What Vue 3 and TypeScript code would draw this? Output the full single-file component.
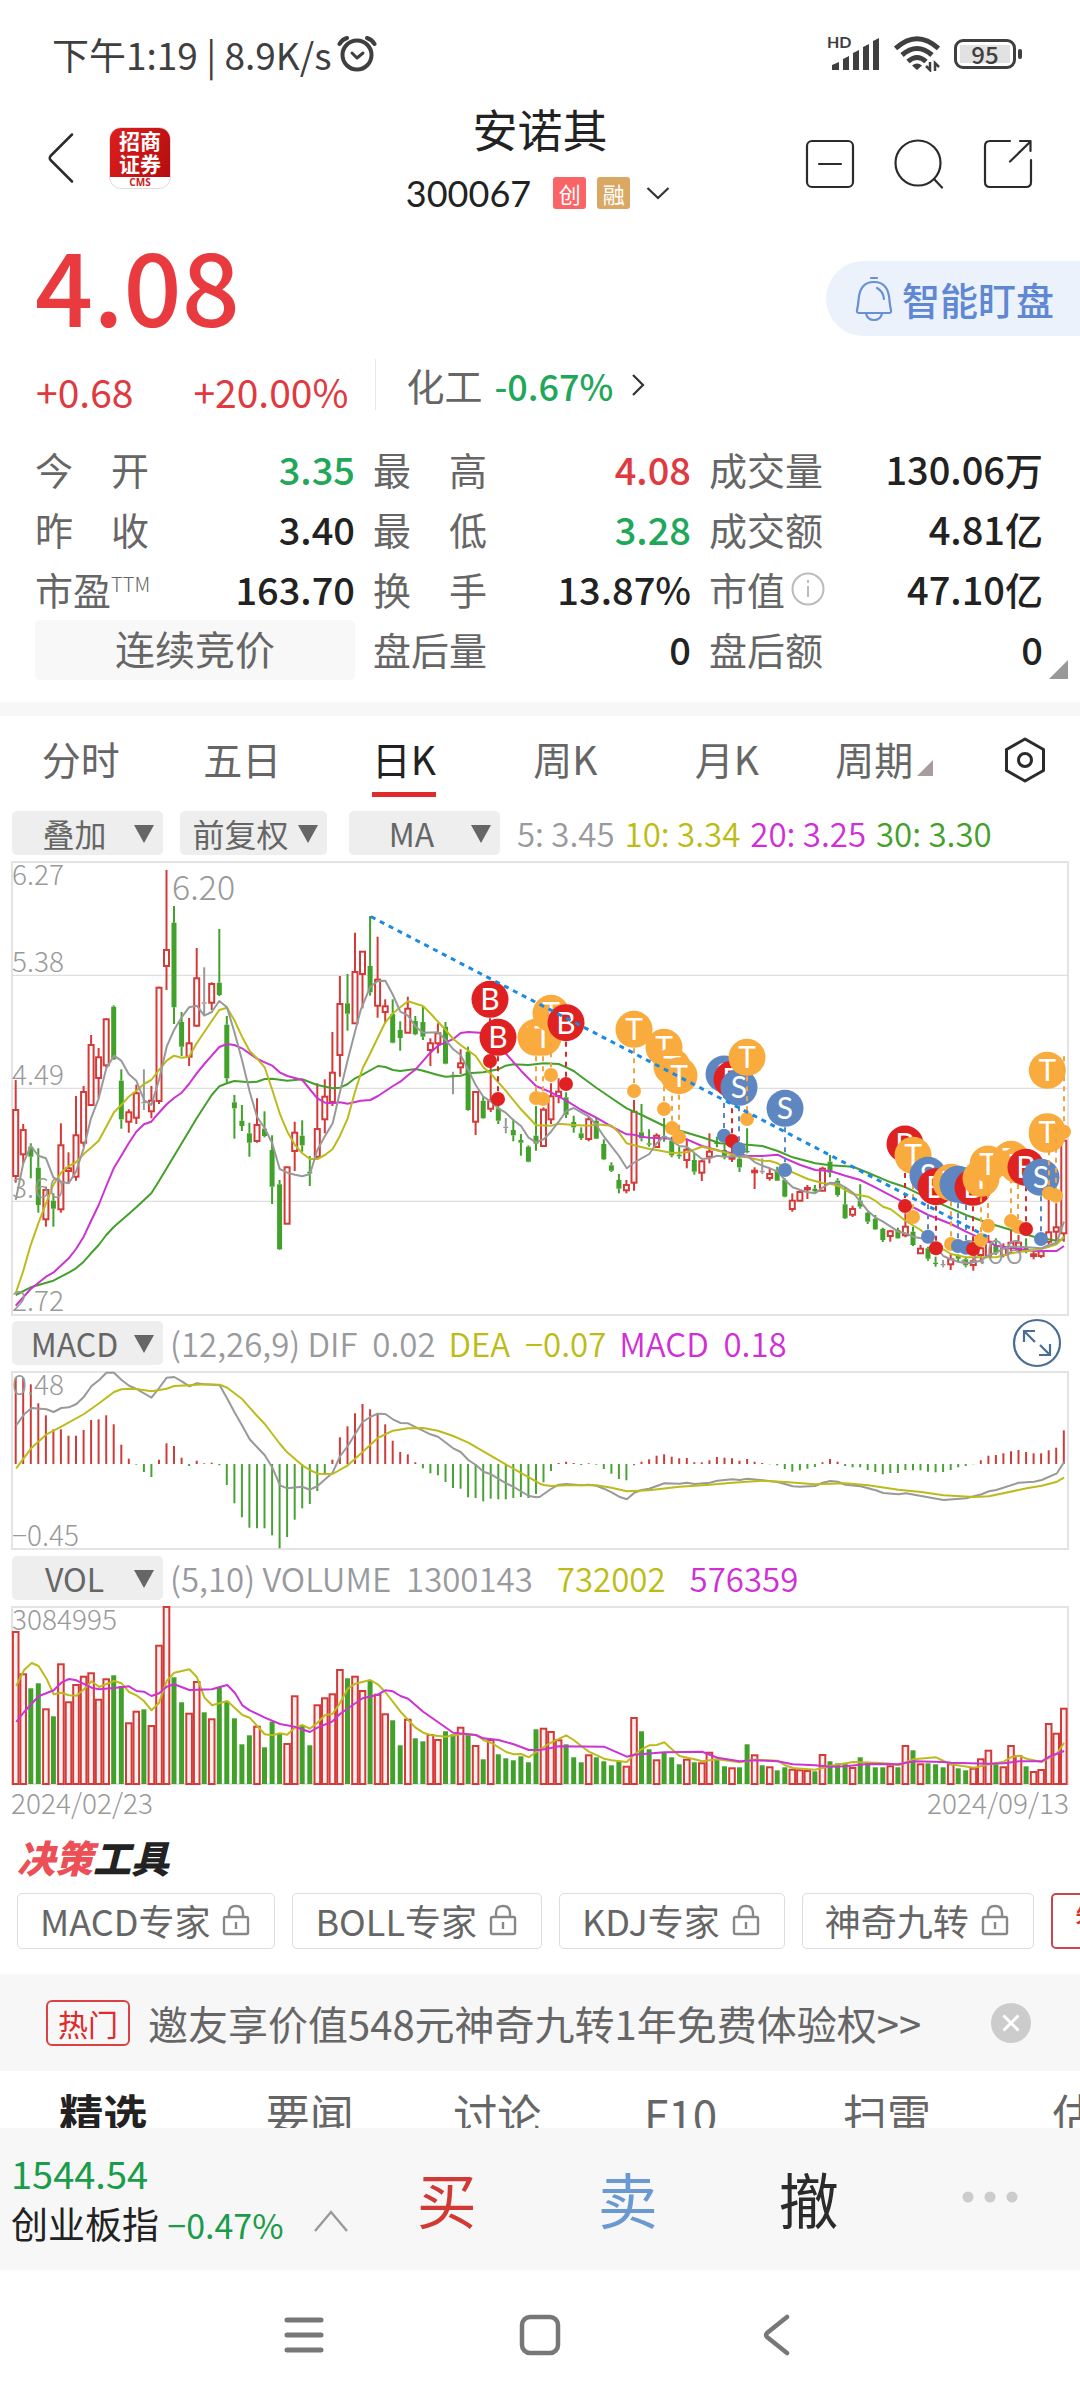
<script setup lang="ts">
interface Stat {
  label: string
  value: string
  tone?: 'up' | 'down'
  spread?: boolean
  sup?: string
  info?: boolean
}

const stats: Stat[] = [
  { label: '今开', value: '3.35', tone: 'down', spread: true },
  { label: '最高', value: '4.08', tone: 'up', spread: true },
  { label: '成交量', value: '130.06万' },
  { label: '昨收', value: '3.40', spread: true },
  { label: '最低', value: '3.28', tone: 'down', spread: true },
  { label: '成交额', value: '4.81亿' },
  { label: '市盈', value: '163.70', sup: 'TTM' },
  { label: '换手', value: '13.87%', spread: true },
  { label: '市值', value: '47.10亿', info: true },
]
const afterHours: Stat[] = [
  { label: '盘后量', value: '0' },
  { label: '盘后额', value: '0' },
]

const periods = ['分时', '五日', '日K', '周K', '月K', '周期']
const averages = [
  { text: '5: 3.45', tone: 'grey' },
  { text: '10: 3.34', tone: 'yellow' },
  { text: '20: 3.25', tone: 'pink' },
  { text: '30: 3.30', tone: 'green' },
]
const tools = ['MACD专家', 'BOLL专家', 'KDJ专家', '神奇九转']
const sections = [
  { text: '精选', span: 206 },
  { text: '要闻', span: 206 },
  { text: '讨论', span: 168 },
  { text: 'F10', span: 198 },
  { text: '扫雷', span: 214 },
  { text: '估值', span: 204 },
]

// All three panels share one column of days.
const dayX = (i: number): number => 15.7 + i * 7.54
const round = (n: number): number => Math.round(n * 10) / 10
const PAD = 2

// Levels are stored in thirds of a chart unit, counted downwards.
const priceY = (v: number): number => round((v - 36) / 3 + PAD)
const macdY = (v: number): number => round((v - 158) / 3 + PAD)
const volY = (v: number): number => round((v - 863) / 3 + PAD)

// Joins consecutive stretches of a curve, each counted from its own left edge.
function trace(parts: string[], stretch: number, unit: number, y: (v: number) => number): string {
  return parts
    .map((part, n) =>
      part
        .trim()
        .split(/\s+/)
        .map((pair) => {
          const [px, py] = pair.split(',').map(Number)
          return `${round(px / unit + n * stretch)},${y(py)}`
        })
        .join(' '),
    )
    .join(' ')
}

// high, body top, body bottom, low, kind (r rise, g fall, n unchanged)
const candleData = `690 780 978 998 r|822 840 913 940 r|880 890 920 985 g|895 953 1065 1088 g|1010 1020 1108 1130 r|1030 1052 1076 1130 g|820 886 1078 1088 r|907 955 963 1000 r|738 856 980 992 r|708 726 878 890 r|555 585 765 768 r|594 622 684 744 r|505 508 646 652 r|466 470 628 630 g|658 692 808 836 g|778 787 815 848 r|704 730 803 822 r|658 756 760 780 n|708 752 784 805 r|410 413 753 762 r|60 300 348 420 r|168 218 472 522 g|486 516 590 618 g|504 580 620 648 r|294 385 527 530 r|352 457 461 495 n|397 402 458 480 r|237 398 435 438 g|498 524 685 698 g|735 757 775 866 g|765 812 828 843 g|818 850 878 920 g|745 825 873 878 r|784 836 858 862 g|856 900 1010 1062 g|990 1003 1198 1200 g|950 952 1121 1122 r|815 848 903 963 r|811 857 886 905 g|918 965 970 1008 g|700 837 920 930 r|688 740 808 850 r|546 668 756 768 r|378 462 615 680 r|372 460 491 542 g|248 366 520 522 r|303 305 372 475 r|198 348 427 437 g|260 389 467 503 r|448 469 486 520 r|448 492 578 580 g|514 540 564 602 g|440 476 548 550 r|498 513 553 556 g|470 516 560 570 g|565 580 600 648 r|520 550 580 610 r|516 530 641 643 g|665 674 678 733 n|598 640 652 672 r|590 605 780 782 g|724 726 815 855 r|738 752 805 806 g|640 752 776 786 r|760 775 812 822 g|804 830 834 850 n|808 840 856 874 g|852 870 878 917 g|886 890 935 937 g|768 857 881 902 g|772 779 888 890 r|700 739 808 822 r|685 725 738 760 r|727 742 794 804 g|797 816 832 848 g|832 850 864 870 g|800 808 867 874 r|802 812 866 867 g|868 882 928 930 g|937 946 962 966 g|972 990 1016 1030 g|990 1005 1021 1030 r|750 785 998 1022 r|762 847 865 874 g|838 880 884 890 g|850 857 891 893 r|804 858 862 875 g|860 872 916 922 g|890 914 919 926 g|866 899 930 955 r|910 930 965 974 g|930 934 968 993 r|850 905 920 940 r|860 876 882 892 g|880 900 920 928 g|890 920 926 936 r|920 926 952 966 g|835 903 907 910 g|952 962 967 1017 r|925 962 967 972 n|955 972 984 992 r|950 962 992 993 g|985 990 1040 1042 g|1030 1052 1077 1085 r|1020 1026 1052 1054 r|1005 1014 1018 1047 r|1005 1016 1024 1028 g|950 956 1022 1024 r|915 935 968 982 g|985 992 1035 1040 g|1010 1063 1105 1107 g|1067 1077 1094 1101 r|1003 1052 1070 1076 g|1085 1088 1115 1122 g|1095 1106 1138 1140 g|1133 1137 1170 1176 g|1140 1144 1158 1175 r|1133 1140 1165 1166 g|1090 1130 1156 1162 r|1130 1145 1185 1188 g|1185 1196 1210 1212 r|1190 1195 1226 1232 g|1220 1238 1242 1250 g|1230 1242 1246 1252 n|1210 1228 1243 1260 r|1213 1216 1226 1236 g|1220 1228 1246 1252 g|1220 1234 1245 1262 r|1180 1195 1215 1232 r|1155 1175 1218 1220 r|1165 1185 1210 1215 g|1180 1195 1215 1222 r|1140 1178 1195 1210 r|1155 1178 1200 1205 r|1165 1190 1205 1210 g|1205 1213 1218 1228 r|1195 1204 1218 1224 r|1050 1147 1175 1185 r|1060 1132 1145 1175 r|870 872 1150 1175 r`

const candles = candleData.split('|').map((row, i) => {
  const [high, top, bottom, low, kind] = row.split(' ')
  const x = dayX(i)
  const t = priceY(Number(top))
  const b = priceY(Number(bottom))
  return {
    kind,
    x: round(x),
    left: round(x - 2.5),
    high: priceY(Number(high)),
    low: priceY(Number(low)),
    t,
    b,
    height: Math.max(1, round(b - t)),
  }
})

const price = (parts: string[]): string => trace(parts, 360, 3, priceY)
const priceLines = [
  {
    tone: 'green',
    points: price([
      '47,1335 92,1312 160,1292 206,1268 228,1255 251,1235 273,1210 296,1185 319,1155 342,1130 386,1092 409,1072 454,1030 477,993 500,955 545,880 590,805 635,735 658,709 681,700 703,693 749,697 771,695 794,687 817,686 862,692 907,688 952,705 998,715 1020,713 1043,702 1065,685',
      '2,677 54,648 76,651 99,660 121,663 167,657 189,662 234,675 257,680 302,677 325,670 370,667 415,658 437,647 460,643 505,645 551,640 596,642 619,652 641,663 664,680 709,713 755,745 800,775 845,795 913,828 1026,862',
      '0,880 82,884 127,888 173,903 218,922 286,940 331,946 399,950 444,968 512,997 557,1012 625,1045 693,1075 738,1095 806,1120 874,1140 942,1160 1010,1172 1032,1168',
    ]),
  },
  {
    tone: 'pink',
    points: price([
      '47,1367 92,1317 138,1280 160,1268 206,1225 228,1197 251,1160 273,1113 296,1065 319,1008 342,953 364,917 386,880 409,845 432,823 454,815 477,788 500,763 522,744 545,728 567,702 590,670 613,642 635,617 658,591 681,582 703,585 726,595 771,626 794,637 817,647 839,667 862,678 907,690 952,745 975,758 998,760 1020,757 1043,761',
      '2,752 31,750 54,738 99,708 121,695 144,676 167,658 211,608 234,587 257,577 280,567 302,549 325,546 360,548 393,565 437,610 483,662 528,708 573,727 619,752 664,780 709,803 755,830 800,853 822,854 845,860 868,863 913,865 936,867 981,868 1026,888',
      '0,903 82,917 127,918 173,914 195,925 241,945 286,960 331,963 376,977 421,990 467,1013 557,1060 625,1095 693,1122 738,1145 783,1165 829,1187 897,1197 942,1203 1010,1203 1032,1188',
    ]),
  },
  {
    tone: 'yellow',
    points: price([
      '47,1330 70,1262 92,1185 115,1120 138,1060 160,1005 183,968 206,948 228,937 251,912 273,893 296,872 319,830 342,787 364,765 386,740 409,722 432,702 454,690 477,660 500,632 522,617 545,623 567,620 590,580 635,513 658,480 681,473 703,510 726,560 749,603 771,625 794,652 817,720 839,790 862,845 885,885 907,910 930,927 952,927 975,915 998,897 1020,857 1043,805 1065,725',
      '2,672 8,655 31,610 54,562 76,517 99,490 121,472 144,454 189,468 211,490 234,515 257,540 280,567 302,585 347,618 370,652 393,672 437,722 483,778 528,826 573,827 596,821 641,825 687,827 709,823 755,827 777,848 800,880 822,886 868,897 890,900 936,909 981,907 1026,890',
      '0,903 60,920 82,922 105,927 127,932 150,933 173,940 218,967 263,987 309,1000 331,1001 354,1007 376,1020 399,1032 444,1040 467,1053 489,1070 512,1078 535,1095 557,1113 602,1140 625,1160 648,1185 693,1212 738,1222 829,1222 874,1210 919,1203 964,1197 987,1190 1010,1183 1032,1160',
    ]),
  },
  {
    tone: 'grey',
    points: price([
      '47,1050 70,940 92,888 115,917 138,925 160,982 183,995 206,1000 228,965 251,895 273,805 296,745 319,655 342,617 364,632 386,672 409,692 432,750 454,765 477,690 500,590 522,540 545,502 567,472 590,467 613,497 635,486 658,453 681,472 703,545 726,630 749,725 771,800 794,835 817,880 839,957 862,968 885,974 907,979 930,972 952,900 975,858 998,820 1020,725 1043,630 1065,545',
      '2,480 31,410 54,393 76,392 99,435 121,485 144,497 167,530 189,548 234,547 257,570 280,598 302,615 325,660 347,705 370,740 393,755 415,775 437,788 460,810 483,828 505,862 528,877 551,868 573,845 596,815 619,783 641,774 664,787 687,800 709,825 732,860 755,890 777,918 800,955 822,938 868,912 890,880 913,858 936,872 958,888 981,890 1004,910 1026,927 1049,925 1071,917',
      '14,920 82,918 105,937 127,947 150,955 173,965 195,990 218,1012 241,1020 263,1027 286,1030 309,1012 331,998 354,1000 376,1012 399,1028 421,1055 444,1083 467,1103 489,1115 512,1130 535,1145 557,1150 580,1160 602,1165 625,1165 648,1190 670,1218 693,1228 716,1236 738,1240 761,1237 783,1232 806,1215 829,1208 851,1195 874,1190 897,1190 942,1193 964,1195 987,1185 1010,1178 1032,1115',
    ]),
  },
]

// Trades: letter, badge x and y, anchor x and y.
const tradeData: [string, number, number, number, number][] = [
  ['B', 1470, 448, 1470, 633], ['B', 1494, 562, 1494, 747], ['T', 1608, 562, 1608, 744],
  ['T', 1629, 562, 1629, 747], ['T', 1653, 490, 1653, 675], ['B', 1698, 518, 1698, 702],
  ['T', 1902, 538, 1902, 723], ['T', 1992, 592, 1992, 777], ['T', 2016, 650, 2016, 834],
  ['T', 2037, 677, 2037, 861], ['S', 2172, 672, 2172, 857], ['B', 2196, 688, 2196, 873],
  ['S', 2217, 712, 2217, 897], ['T', 2241, 622, 2241, 807], ['S', 2355, 775, 2355, 960],
  ['B', 2715, 882, 2715, 1068], ['T', 2739, 916, 2739, 1101], ['S', 2784, 976, 2784, 1160],
  ['B', 2808, 1010, 2808, 1195], ['T', 2853, 997, 2853, 1182], ['S', 2874, 1003, 2874, 1188],
  ['S', 2898, 1008, 2898, 1193], ['B', 2919, 1012, 2919, 1197], ['T', 2943, 985, 2943, 1170],
  ['T', 2964, 942, 2964, 1127], ['T', 3033, 928, 3033, 1113], ['T', 3054, 945, 3054, 1130],
  ['B', 3078, 952, 3078, 1137], ['S', 3123, 982, 3123, 1167], ['T', 3142, 853, 3147, 1030],
  ['T', 3142, 845, 3168, 1037], ['T', 3142, 661, 3192, 845],
]
const trades = tradeData.map(([letter, bx, by, ax, ay]) => ({
  letter,
  bx: round(bx / 3),
  by: priceY(by),
  ax: round(ax / 3),
  ay: priceY(ay),
}))

const priceTicks = [
  { text: '6.27', y: priceY(105) },
  { text: '5.38', y: priceY(367) },
  { text: '4.49', y: priceY(705) },
  { text: '3.60', y: priceY(1043) },
  { text: '2.72', y: priceY(1383) },
]
const gridLines = [376, 715, 1054].map(priceY)

const macdZero = macdY(434)
const macdData = '175,175,195,252,288,330,330,349,349,332,302,300,288,315,376,418,436,458,473,421,372,380,415,440,424,432,430,438,497,552,594,625,627,627,648,687,653,601,567,554,515,467,421,354,321,282,254,270,282,315,364,398,405,429,447,462,468,488,506,508,534,536,546,538,540,540,536,533,536,524,489,455,431,427,431,437,432,436,449,463,479,483,438,427,420,409,405,412,417,416,429,429,423,413,415,417,424,419,427,431,435,438,449,457,453,448,443,429,419,427,440,444,444,452,458,465,461,461,452,453,453,457,459,458,452,444,440,435,423,409,407,402,396,392,398,402,402,393,385,333'
const macdBars = macdData.split(',').map((v, i) => ({
  x: round(dayX(i)),
  y: macdY(Number(v)),
  up: Number(v) < 434,
}))
const sub = (parts: string[], y: (v: number) => number): string => trace(parts, 540, 2.904, y)
const dif = sub(
  [
    '47,318 70,285 92,266 135,270 156,278 178,266 200,264 222,254 244,232 266,200 288,182 309,160 331,160 353,182 375,199 396,209 440,235 462,206 484,175 506,173 528,186 550,201 572,192 594,195 638,198 660,238 682,280 704,320 725,360 747,384 769,408 791,445 813,498 834,507 878,502 900,511 922,500 966,460 988,410 1010,380 1053,308 1075,293 1097,283 1119,284 1141,300 1163,311 1185,312 1250,345 1272,352 1316,387 1338,398 1360,422 1382,437 1404,457 1426,465 1470,492 1492,503 1536,530 1558,534',
    '0,532 11,524 32,509 54,496 76,494 120,498 142,496 164,499 186,508 208,519 230,532 252,540 274,520 295,512 317,508 361,492 405,493 427,490 449,494 493,490 515,484 559,480 580,482 602,478 646,483 690,488 734,501 755,502 799,500 821,490 843,485 865,487 887,496 931,501 975,513 997,521 1041,525 1063,522 1107,530 1172,542 1238,537 1282,525 1304,516 1325,512 1391,490 1435,487 1457,482 1501,462 1522,428',
  ],
  macdY,
)
const dea = sub(
  [
    '47,447 92,385 135,345 178,322 244,284 288,252 331,218 353,210 375,208 396,209 440,216 484,208 506,200 550,198 594,195 638,196 660,205 704,240 747,290 769,314 813,374 834,399 878,438 900,452 922,463 966,464 1010,438 1053,398 1097,356 1141,334 1185,327 1229,326 1272,334 1316,350 1360,370 1470,436',
    '0,493 11,497 32,500 76,498 164,498 208,505 252,516 317,513 405,502 493,496 559,490 646,484 712,488 799,495 887,492 953,498 1041,511 1107,518 1172,528 1260,533 1304,531 1413,507 1457,499 1501,487 1522,475',
  ],
  macdY,
)

const volData = '938r,1065r,1107g,1092g,1170r,1191g,1035r,1149r,1097r,1072r,1062r,1141r,1080r,1068g,1100g,1212r,1177r,1170g,1220r,979r,863r,1074g,1149g,1183r,1088r,1179g,1200r,1103g,1145g,1197g,1275g,1248g,1222r,1284g,1207g,1243g,1274r,1131r,1217g,1278g,1158r,1137r,1125r,1052r,1077g,1072r,1115r,1084g,1126r,1185r,1203g,1278g,1201r,1257g,1266g,1247r,1262r,1236g,1245g,1225r,1245g,1280r,1320g,1262r,1305g,1317g,1323g,1311g,1329g,1230g,1228r,1238r,1263r,1275g,1314g,1329g,1308r,1314g,1326g,1338g,1326g,1342r,1196r,1236g,1290g,1323r,1299g,1314g,1335g,1321r,1329g,1332r,1300r,1322g,1341g,1347r,1344g,1275g,1308r,1338g,1344r,1353g,1344g,1351r,1353r,1355r,1356g,1307r,1326g,1332g,1332g,1346r,1314g,1329g,1344g,1344g,1341r,1344g,1280r,1293g,1335r,1332g,1335g,1344g,1335r,1347g,1353g,1348r,1320r,1294r,1335g,1344r,1280r,1310r,1341g,1358r,1352r,1214r,1243r,1168r'
const volBase = volY(1394)
const volBars = volData.split(',').map((cell, i) => {
  const y = volY(parseInt(cell, 10))
  const up = cell.endsWith('r')
  return { up, left: round(dayX(i) - (up ? 2.8 : 2.5)), y, height: round(volBase - y) }
})
const volFast = sub(
  [
    '47,1100 70,1052 92,1031 112,1040 135,1078 156,1125 178,1120 200,1128 222,1129 244,1110 266,1086 288,1103 331,1085 353,1092 375,1118 396,1128 418,1145 440,1173 462,1150 484,1085 506,1060 550,1050 572,1074 594,1135 616,1158 660,1145 704,1187 725,1195 747,1220 769,1245 791,1248 813,1242 834,1246 856,1225 878,1217 900,1228 922,1210 944,1187 966,1184 988,1150 1010,1108 1032,1093 1075,1082 1097,1095 1119,1118 1163,1177 1207,1225 1229,1240 1250,1247 1294,1252 1338,1244 1382,1247 1404,1262 1426,1270 1470,1298 1492,1305 1514,1304 1536,1314',
    '0,1290 11,1283 32,1270 76,1248 98,1262 120,1280 142,1297 186,1318 208,1323 252,1328 274,1305 295,1290 317,1278 339,1277 361,1269 383,1290 405,1310 449,1320 471,1326 515,1320 580,1329 624,1321 690,1324 712,1338 734,1346 799,1351 843,1340 909,1328 975,1330 1019,1333 1041,1338 1085,1320 1150,1314 1172,1325 1194,1335 1260,1345 1304,1335 1347,1327 1369,1313 1391,1309 1413,1318 1457,1328 1479,1315 1501,1303 1522,1270',
  ],
  volY,
)
const volSlow = sub(
  [
    '47,1208 70,1178 112,1131 156,1113 178,1090 200,1079 222,1083 266,1105 288,1110 331,1106 375,1101 396,1115 418,1117 440,1130 462,1122 484,1102 506,1095 550,1112 616,1110 638,1103 660,1097 682,1120 704,1158 725,1173 769,1195 813,1214 856,1222 900,1238 922,1225 966,1206 988,1183 1053,1137 1097,1126 1119,1113 1141,1116 1163,1130 1185,1138 1229,1177 1316,1240 1382,1247 1404,1257 1448,1262 1492,1275 1536,1292',
    '0,1292 32,1286 54,1281 186,1282 252,1312 274,1306 361,1299 471,1297 515,1315 580,1326 624,1323 690,1326 734,1335 799,1338 843,1342 887,1341 953,1334 1041,1335 1085,1326 1172,1328 1194,1330 1304,1333 1347,1332 1391,1326 1457,1326 1479,1312 1522,1295',
  ],
  volY,
)
</script>

<template>
  <div class="page">
    <div class="status">
      <span class="clock">下午1:19 | 8.9K/s</span>
      <svg class="alarm" width="40" height="38" viewBox="0 0 40 38" fill="none" stroke="#3f3f3f" stroke-linecap="round">
        <circle cx="20" cy="20" r="14.5" stroke-width="4" />
        <path d="M2.5 9Q5 4.5 10 3M37.5 9Q35 4.5 30 3" stroke-width="4" />
        <path d="M15 18l5 5 6-5" stroke-width="3" stroke-linejoin="round" />
      </svg>
      <span class="status-right">
        <span class="signal">
          <span class="hd">HD</span>
          <svg width="50" height="34" viewBox="0 0 50 34" fill="#3f3f3f">
            <path d="M2 28l7-3v8H2zM13 22l6-3v14h-6zM23 16l6-3v20h-6zM33 10l6-3v26h-6zM43 4l6-3v32h-6z" />
          </svg>
        </span>
        <svg width="46" height="36" viewBox="0 0 46 36" fill="none" stroke="#3f3f3f">
          <path d="M1.5 12.5Q23-7 44.5 12.5" stroke-width="5" />
          <path d="M8 19Q23 6 38 19" stroke-width="5" />
          <path d="M14 25.500Q23 17.500 32 25.500" stroke-width="5" />
          <path d="M23 34l-5-4.500q5-4 10 0z" fill="#3f3f3f" stroke="none" />
          <path d="M36 26v8l-4-4M41 35v-8l4 4" stroke-width="2.500" />
        </svg>
        <span class="battery"><span class="charge">95</span></span>
      </span>
    </div>

    <header class="head">
      <div class="head-left">
        <button class="plain back" aria-label="返回">
          <svg width="26" height="50" viewBox="0 0 26 50" fill="none" stroke="#2b2b2b" stroke-width="2.500" stroke-linecap="round" stroke-linejoin="round">
            <path d="M24 1.500L2.500 23q-1.500 2 0 4L24 48.500" />
          </svg>
        </button>
        <div class="logo">
          <div class="logo-name">招商<br />证券</div>
          <div class="logo-cms">CMS</div>
        </div>
      </div>
      <div class="head-mid">
        <h1>安诺其</h1>
        <div class="code-row">
          <span class="code">300067</span>
          <span class="badge pinkish">创</span>
          <span class="badge amber">融</span>
          <svg class="caret" width="24" height="14" viewBox="0 0 24 14" fill="none" stroke="#333" stroke-width="2.200"><path d="M1.500 2L12 12 22.500 2" /></svg>
        </div>
      </div>
      <div class="head-right">
        <button class="plain" aria-label="移除自选">
          <svg width="50" height="50" viewBox="0 0 50 50" fill="none" stroke="#2b2b2b" stroke-width="2.200" stroke-linecap="round">
            <rect x="2" y="2" width="46" height="46" rx="5" /><path d="M14 25h22" />
          </svg>
        </button>
        <button class="plain" aria-label="搜索">
          <svg width="50" height="50" viewBox="0 0 50 50" fill="none" stroke="#2b2b2b" stroke-width="2.200" stroke-linecap="round">
            <circle cx="24" cy="24" r="22.500" /><path d="M40 40l8 8.500" />
          </svg>
        </button>
        <button class="plain" aria-label="分享">
          <svg width="50" height="50" viewBox="0 0 50 50" fill="none" stroke="#2b2b2b" stroke-width="2.200" stroke-linecap="round" stroke-linejoin="round">
            <path d="M27 2H7Q2 2 2 7v36q0 5 5 5h36q5 0 5-5V21M37 2h10.500v10M47 3L27 22.500" />
          </svg>
        </button>
      </div>
    </header>

    <section class="quote">
      <div class="quote-top">
        <strong class="last">4.08</strong>
        <button class="watch">
          <svg width="38" height="46" viewBox="0 0 38 46" fill="none" stroke="#6a8fd6" stroke-width="2.200" stroke-linecap="round" stroke-linejoin="round">
            <path d="M16 2h6M4 37h30q2.500 0 2-3-.8-3-1.500-9-.8-19-15.500-19T3.500 25Q2.800 31 2 34q-.5 3 2 3zM11 37.500q1.500 6.500 8 6.500t8-6.500M22 12q6 3 7 11" />
          </svg>
          智能盯盘
        </button>
      </div>
      <div class="change">
        <span class="delta up">+0.68</span>
        <span class="delta pct up">+20.00%</span>
        <a class="sector" href="#sector">化工 <b class="down">-0.67%</b>
          <svg width="14" height="24" viewBox="0 0 14 24" fill="none" stroke="#333" stroke-width="2.200"><path d="M2 2l10 10L2 22" /></svg>
        </a>
      </div>
      <dl class="stats">
        <div v-for="s in stats" :key="s.label" class="stat">
          <dt :class="{ spread: s.spread }">
            <template v-if="s.spread"><span v-for="c in s.label" :key="c">{{ c }}</span></template>
            <template v-else>{{ s.label }}</template><sup v-if="s.sup">{{ s.sup }}</sup>
            <svg v-if="s.info" width="36" height="36" viewBox="0 0 36 36" fill="none" stroke="#bbb" stroke-width="2">
              <circle cx="18" cy="18" r="15.500" /><path d="M18 15v11M18 9v3" />
            </svg>
          </dt>
          <dd :class="s.tone">{{ s.value }}</dd>
        </div>
        <div class="stat phase">连续竞价</div>
        <div v-for="s in afterHours" :key="s.label" class="stat">
          <dt>{{ s.label }}</dt>
          <dd>{{ s.value }}</dd>
        </div>
        <i class="more-corner"></i>
      </dl>
    </section>

    <nav class="periods">
      <a v-for="p in periods" :key="p" href="#chart" class="period" :class="{ on: p === '日K' }">
        <span>{{ p }}</span><i v-if="p === '周期'" class="corner"></i>
      </a>
      <button class="plain settings" aria-label="设置">
        <svg width="42" height="46" viewBox="0 0 42 46" fill="none" stroke="#2b2b2b" stroke-width="3" stroke-linejoin="round">
          <path d="M21 2l18.500 10.500v21L21 44 2.500 33.500v-21z" /><circle cx="21" cy="23" r="6.500" />
        </svg>
      </button>
    </nav>

    <section class="charts">
      <div class="bar">
        <span class="drop"><select aria-label="叠加"><option>叠加</option></select></span>
        <span class="drop narrow"><select aria-label="复权"><option>前复权</option></select></span>
        <span class="drop"><select aria-label="主图指标"><option>MA</option></select></span>
        <span class="legend main-legend">
          <span v-for="a in averages" :key="a.text" :class="a.tone">{{ a.text }}</span>
        </span>
      </div>

      <svg class="chart" viewBox="0 0 1080 456">
        <rect class="frame" x="12" :y="PAD" width="1056" height="453" />
        <line v-for="y in gridLines" :key="y" class="grid" x1="12" x2="1068" :y1="y" :y2="y" />
        <g v-for="c in candles" :key="c.x" :class="['candle', c.kind]">
          <line :x1="c.x" :x2="c.x" :y1="c.high" :y2="c.t" />
          <line :x1="c.x" :x2="c.x" :y1="c.b" :y2="c.low" />
          <rect :x="c.left" :y="c.t" width="5" :height="c.height" />
        </g>
        <polyline v-for="l in priceLines" :key="l.tone" :class="['curve', l.tone]" :points="l.points" />
        <text v-for="t in priceTicks" :key="t.text" class="tick" x="12" :y="t.y">{{ t.text }}</text>
        <text class="extreme" x="172" :y="priceY(150)">6.20</text>
        <text class="extreme" x="1023" :y="priceY(1243)" text-anchor="end">3.06</text>
        <g v-for="(t, i) in trades" :key="i" :class="['trade', t.letter]">
          <circle :cx="t.bx" :cy="t.by" r="18.500" />
          <text :x="t.bx" :y="t.by + 11" text-anchor="middle">{{ t.letter }}</text>
          <line :x1="t.ax" :x2="t.ax" :y1="t.by + (t.ax === t.bx ? 19 : -14)" :y2="t.ay" />
          <circle :cx="t.ax" :cy="t.ay" r="7" />
        </g>
        <line class="trend" x1="371" :y1="priceY(200)" x2="987" :y2="priceY(1160)" />
      </svg>

      <div class="bar">
        <span class="drop"><select aria-label="副图一"><option>MACD</option></select></span>
        <span class="legend macd-legend">
          <span class="grey">(12,26,9) DIF&nbsp; 0.02</span>
          <span class="yellow">DEA&nbsp; −0.07</span>
          <span class="pink">MACD&nbsp; 0.18</span>
        </span>
        <button class="plain expand" aria-label="全屏">
          <svg width="50" height="50" viewBox="0 0 50 50" fill="none" stroke="#4a6d92" stroke-width="2.200">
            <circle cx="25" cy="25" r="23" /><path d="M12 24V13h11M12 13l11 11M38 26v11H27M38 37L28 27" />
          </svg>
        </button>
      </div>

      <svg class="chart" viewBox="0 0 1080 181">
        <rect class="frame" x="12" :y="PAD" width="1056" height="177" />
        <line v-for="b in macdBars" :key="b.x" :class="b.up ? 'bar-up' : 'bar-down'" :x1="b.x" :x2="b.x" :y1="macdZero" :y2="b.y" />
        <polyline class="curve grey" :points="dif" />
        <polyline class="curve yellow" :points="dea" />
        <text class="tick" x="12" :y="macdY(228)">0.48</text>
        <text class="tick" x="12" :y="macdY(681)">−0.45</text>
      </svg>

      <div class="bar">
        <span class="drop"><select aria-label="副图二"><option>VOL</option></select></span>
        <span class="legend vol-legend">
          <span class="grey">(5,10) VOLUME&nbsp; 1300143</span>
          <span class="yellow">732002</span>
          <span class="pink">576359</span>
        </span>
      </div>

      <svg class="chart" viewBox="0 0 1080 181">
        <rect class="frame" x="12" :y="PAD" width="1056" height="177" />
        <text class="tick" x="12" :y="volY(933)">3084995</text>
        <rect v-for="b in volBars" :key="b.left" :class="b.up ? 'vol-up' : 'vol-down'" :x="b.left" :y="b.y" :width="b.up ? 5.6 : 5" :height="b.height" />
        <polyline class="curve yellow" :points="volFast" />
        <polyline class="curve pink" :points="volSlow" />
      </svg>
      <div class="dates"><time>2024/02/23</time><time>2024/09/13</time></div>
    </section>

    <section class="tools">
      <h2><span>决策</span>工具</h2>
      <div class="chips">
        <button v-for="t in tools" :key="t" class="chip">
          {{ t }}
          <svg width="28" height="32" viewBox="0 0 28 32" fill="none" stroke="#888" stroke-width="2.400">
            <rect x="2" y="13" width="24" height="17" rx="1.500" /><path d="M7 13V9q0-7 7-7t7 7v4M14 18v7" />
          </svg>
        </button>
        <button class="chip hot">智能选股</button>
      </div>
    </section>

    <aside class="banner">
      <span class="tag">热门</span>
      <a href="#promo">邀友享价值548元神奇九转1年免费体验权&gt;&gt;</a>
      <button class="plain close" aria-label="关闭">
        <svg width="40" height="40" viewBox="0 0 40 40"><circle cx="20" cy="20" r="20" fill="#ccc" /><path d="M12.500 12.500l15 15M27.500 12.500l-15 15" stroke="#fff" stroke-width="3" /></svg>
      </button>
    </aside>

    <nav class="sections">
      <a v-for="s in sections" :key="s.text" href="#news" :class="{ on: s.text === '精选' }" :style="{ flexGrow: s.span }">{{ s.text }}</a>
    </nav>

    <footer class="dock">
      <div class="index">
        <div>
          <div class="index-value">1544.54</div>
          <div class="index-name">创业板指 <span class="index-pct">−0.47%</span></div>
        </div>
        <svg width="34" height="22" viewBox="0 0 34 22" fill="none" stroke="#999" stroke-width="2.400"><path d="M1 21L17 2l16 19" /></svg>
      </div>
      <button class="act buy">买</button>
      <button class="act sell">卖</button>
      <button class="act">撤</button>
      <button class="act" aria-label="更多">
        <svg width="56" height="12" viewBox="0 0 56 12" fill="#ccc"><circle cx="6" cy="6" r="5.500" /><circle cx="28" cy="6" r="5.500" /><circle cx="50" cy="6" r="5.500" /></svg>
      </button>
    </footer>

    <div class="system">
      <button class="plain" aria-label="最近任务">
        <svg width="40" height="40" viewBox="0 0 40 40" stroke="#777" stroke-width="5" stroke-linecap="round"><path d="M3 5h34M3 20h34M3 35h34" /></svg>
      </button>
      <button class="plain" aria-label="主页">
        <svg width="42" height="42" viewBox="0 0 42 42" fill="none" stroke="#777" stroke-width="4.500"><rect x="3" y="3" width="36" height="36" rx="8" /></svg>
      </button>
      <button class="plain" aria-label="返回">
        <svg width="28" height="42" viewBox="0 0 28 42" fill="none" stroke="#777" stroke-width="4.500" stroke-linecap="round" stroke-linejoin="round"><path d="M25 3L5 19q-2 2 0 4l20 16" /></svg>
      </button>
    </div>
  </div>
</template>

<style>
body {
  background: #fff;
}
</style>

<style scoped>
.page {
  overflow: hidden;
  background: #fff;
  color: #222;
  font-family: "Noto Sans CJK SC", "Noto Sans", sans-serif;
}
svg {
  display: block;
  flex: none;
}
button,
select {
  margin: 0;
  padding: 0;
  border: 0;
  background: none;
  color: inherit;
  font-family: inherit;
}
a {
  color: inherit;
  text-decoration: none;
}
h1,
h2,
dl,
dt,
dd {
  margin: 0;
}
.plain {
  display: flex;
  align-items: center;
  justify-content: center;
}
.up {
  color: #df3a3f;
}
.down {
  color: #1fa75a;
}

.status {
  display: flex;
  align-items: center;
  height: 100px;
  padding: 4px 57px 0 52px;
  color: #3f3f3f;
}
.clock {
  margin-right: 5px;
  font-size: 37px;
  line-height: 44px;
}
.status-right {
  display: flex;
  align-items: center;
  gap: 14px;
  margin-left: auto;
}
.signal {
  position: relative;
}
.hd {
  position: absolute;
  top: -3px;
  left: -3px;
  font-family: Lato, sans-serif;
  font-size: 16px;
  font-weight: 700;
  line-height: 16px;
}
.battery {
  position: relative;
  box-sizing: border-box;
  width: 62px;
  height: 30px;
  margin-right: 7px;
  padding: 3px;
  border: 3px solid #3f3f3f;
  border-radius: 9px;
}
.battery::after {
  content: "";
  position: absolute;
  top: 7px;
  right: -9px;
  width: 4px;
  height: 10px;
  border-radius: 2px;
  background: #3f3f3f;
}
.charge {
  display: block;
  background: #e2e2e2;
  font-size: 24px;
  font-weight: 500;
  line-height: 18px;
  text-align: center;
}

.head {
  display: grid;
  grid-template-columns: 1fr auto 1fr;
}
.head-left {
  display: flex;
  align-items: center;
  height: 61px;
  padding: 23px 0 0 48px;
}
.logo {
  box-sizing: border-box;
  width: 62px;
  height: 62px;
  margin-left: 35px;
  overflow: hidden;
  border: 1px solid #ddd;
  border-radius: 12px;
  background: #fff;
  text-align: center;
}
.logo-name {
  height: 49px;
  padding-top: 1px;
  box-sizing: border-box;
  background: linear-gradient(120deg, #dc1f1c, #b50d10);
  color: #fff;
  font-size: 21px;
  font-weight: 700;
  line-height: 23px;
}
.logo-cms {
  color: #c22;
  font-family: "Open Sans", sans-serif;
  font-size: 10px;
  font-weight: 700;
  line-height: 11px;
}
.head-mid {
  text-align: center;
}
h1 {
  font-size: 45px;
  font-weight: 400;
  line-height: 50px;
}
.code-row {
  display: flex;
  align-items: center;
  height: 32px;
  margin-top: 23px;
}
.code {
  margin-right: 22px;
  font-family: Lato, sans-serif;
  font-size: 36px;
  line-height: 32px;
}
.badge {
  width: 33px;
  margin-right: 11px;
  border-radius: 3px;
  color: #fff;
  font-size: 22px;
  line-height: 32px;
}
.pinkish {
  background: #fb6467;
}
.amber {
  background: #d9a964;
}
.caret {
  margin: 0 4px 0 5px;
}
.head-right {
  display: flex;
  justify-content: flex-end;
  gap: 39px;
  height: 50px;
  padding: 35px 47px 0 0;
}

.quote-top {
  display: flex;
  align-items: flex-start;
  justify-content: space-between;
  margin-top: 34px;
  padding-left: 35px;
}
.last {
  color: #e93a40;
  font-size: 102px;
  font-weight: 500;
  line-height: 80px;
}
.watch {
  display: flex;
  align-items: center;
  gap: 9px;
  height: 75px;
  margin-top: 18px;
  padding: 0 26px 0 29px;
  border-radius: 38px 0 0 38px;
  background: #ecf2fb;
  color: #6088d2;
  font-size: 38px;
  font-weight: 500;
  line-height: 44px;
}
.change {
  display: flex;
  height: 51px;
  margin-top: 23px;
  padding-left: 36px;
  font-size: 38px;
  line-height: 44px;
}
.delta {
  padding-top: 10px;
  font-size: 39px;
}
.pct {
  margin-left: 60px;
  margin-right: 27px;
}
.sector {
  display: flex;
  align-items: center;
  gap: 12px;
  padding-left: 30px;
  border-left: 1px solid #e8e8e8;
  color: #666;
}
.sector b {
  font-weight: 500;
  font-size: 36px;
}
.sector svg {
  margin-left: 6px;
}
.stats {
  position: relative;
  display: grid;
  grid-template-columns: 320fr 318fr 334fr;
  grid-auto-rows: 60px;
  column-gap: 18px;
  margin-top: 30px;
  padding: 0 37px 0 35px;
}
.stat {
  display: flex;
  align-items: center;
  justify-content: space-between;
  box-sizing: border-box;
  padding-bottom: 3px;
  font-size: 38px;
  line-height: 57px;
}
.stat dt {
  display: flex;
  align-items: center;
  color: #666;
}
.stat .spread {
  justify-content: space-between;
  width: 114px;
}
.stat sup {
  align-self: flex-start;
  font-size: 20px;
  font-weight: 300;
  line-height: 47px;
}
.stat svg {
  margin-left: 5px;
}
.stat dd {
  font-weight: 500;
}
.phase {
  justify-content: center;
  border-radius: 5px;
  background: #f8f8f8;
  color: #666;
  font-size: 40px;
}
.more-corner,
.corner {
  width: 0;
  height: 0;
  border-style: solid;
  border-color: transparent transparent #999;
  border-width: 0 0 19px 19px;
}
.more-corner {
  position: absolute;
  right: 12px;
  bottom: 1px;
}

.periods {
  display: flex;
  height: 81px;
  margin-top: 22px;
  border-top: 14px solid #f7f7f7;
}
.period {
  display: flex;
  flex: 16;
  align-items: flex-end;
  justify-content: center;
  color: #666;
  font-size: 39px;
  line-height: 67px;
}
.period span {
  border-bottom: 5px solid transparent;
}
.on span {
  border-color: #e02a2c;
}
.period.on {
  color: #222;
}
.corner {
  margin: 0 8px 21px 4px;
  border-color: transparent transparent #a89d9d;
  border-width: 0 0 16px 16px;
}
.settings {
  flex: 11;
  padding-top: 6px;
}

.bar {
  display: flex;
  align-items: center;
  height: 44px;
  padding: 0 12px;
}
.charts {
  margin-top: 14px;
}
.charts .chart {
  width: 100%;
  height: auto;
  margin: 5px 0;
}
.charts .dates {
  display: flex;
  justify-content: space-between;
  margin-top: -5px;
  padding: 0 11px;
  color: #999;
  font-size: 28px;
  font-weight: 300;
  line-height: 32px;
}
.drop {
  position: relative;
  flex: none;
  width: 151px;
  margin-right: 17px;
}
.narrow {
  width: 147px;
  margin-right: 22px;
}
.drop::after {
  content: "";
  position: absolute;
  top: 14px;
  right: 9px;
  border-style: solid;
  border-width: 18px 10px 0;
  border-color: #666 transparent transparent;
  pointer-events: none;
}
select {
  appearance: none;
  width: 100%;
  height: 44px;
  padding-right: 26px;
  border-radius: 5px;
  background: #eee;
  color: #666;
  font-size: 32px;
  line-height: 44px;
  text-align: center;
  text-align-last: center;
}
.legend {
  display: flex;
  font-size: 33px;
  font-weight: 350;
  line-height: 44px;
  white-space: nowrap;
}
.main-legend {
  gap: 10px;
}
.macd-legend {
  gap: 13px;
  margin-left: -10px;
}
.vol-legend {
  gap: 24px;
  margin-left: -10px;
}
.expand {
  margin: 0 -5px 0 auto;
  padding-right: 11px;
}
.legend .grey {
  color: #999a9e;
}
.legend .yellow {
  color: #bcbc14;
}
.legend .pink {
  color: #d02fd6;
}
.legend .green {
  color: #43a02b;
}

.frame {
  fill: #fff;
  stroke: #e4e4e4;
  stroke-width: 2px;
}
.grid {
  stroke: #d8d8d8;
  stroke-width: 1px;
}
.candle line {
  stroke-width: 2px;
}
.candle rect {
  stroke-width: 2px;
}
.r line,
.r rect {
  stroke: #d33a38;
  fill: #fff;
}
.g line {
  stroke: #41a12b;
}
.g rect {
  fill: #41a12b;
}
.n line {
  stroke: #999;
}
.n rect {
  fill: #999;
}
.curve {
  fill: none;
  stroke-width: 2px;
  stroke-linejoin: round;
}
.curve.grey {
  stroke: #999;
}
.curve.yellow {
  stroke: #bdbb1c;
}
.curve.pink {
  stroke: #cc33d2;
}
.curve.green {
  stroke: #43a02b;
}
.tick {
  fill: #999;
  font-size: 28px;
  font-weight: 300;
}
.extreme {
  fill: #999;
  font-size: 34px;
  font-weight: 300;
}
.trade line {
  stroke-width: 2px;
  stroke-dasharray: 5 5;
}
.trade text {
  fill: #fff;
  font-family: Lato, sans-serif;
  font-size: 30px;
}
.B {
  fill: #e02122;
}
.B line {
  stroke: #d8282b;
}
.T {
  fill: #f9ab3e;
}
.T line {
  stroke: #f0a544;
}
.S {
  fill: #5e87c2;
}
.S line {
  stroke: #5e87c2;
}
.trend {
  stroke: #1b8ae2;
  stroke-width: 3px;
  stroke-dasharray: 5 5;
}
.bar-up {
  stroke: #cc3d3a;
  stroke-width: 2px;
}
.bar-down {
  stroke: #4aa236;
  stroke-width: 2px;
}
.vol-up {
  fill: #fff1f1;
  stroke: #d33a38;
  stroke-width: 2px;
}
.vol-down {
  fill: #41a12b;
}

h2 {
  margin: 17px 0 0 17px;
  font-size: 38px;
  font-style: italic;
  font-weight: 900;
  line-height: 44px;
}
h2 span {
  color: #ec4f55;
}
.chips {
  display: flex;
  gap: 17px;
  margin-top: 14px;
  padding-left: 17px;
}
.chip {
  display: flex;
  flex: none;
  align-items: center;
  gap: 12px;
  box-sizing: border-box;
  height: 56px;
  padding: 0 24px 2px 22px;
  border: 1px solid #ddd;
  border-radius: 5px;
  color: #666;
  font-size: 36px;
}
.chips .hot {
  border: 2px solid #c8474a;
  color: #e02a2c;
}

.banner {
  display: flex;
  align-items: center;
  height: 97px;
  margin-top: 25px;
  padding: 0 49px 0 46px;
  background: #f7f7f7;
  color: #666;
  font-size: 40px;
}
.tag {
  box-sizing: border-box;
  width: 84px;
  margin-right: 18px;
  border: 2px solid #dc4245;
  border-radius: 6px;
  color: #e02a2c;
  font-size: 30px;
  line-height: 42px;
  text-align: center;
}
.close {
  margin-left: auto;
}

.sections {
  display: flex;
  width: 111%;
  height: 57px;
  overflow: hidden;
  color: #666;
  font-size: 44px;
  line-height: 84px;
}
.sections a {
  flex-basis: 0;
  min-width: 0;
  text-align: center;
}
.sections .on {
  color: #222;
  font-weight: 700;
}

.dock {
  display: flex;
  align-items: center;
  position: relative;
  height: 142px;
  background: #f7f7f7;
}
.index {
  display: flex;
  flex: none;
  align-items: flex-end;
  justify-content: space-between;
  box-sizing: border-box;
  width: 33%;
  padding: 0 8px 0 11px;
  line-height: 50px;
  white-space: nowrap;
}
.index-name {
  font-size: 37px;
}
.index-value,
.index-pct {
  color: #1a9c4b;
  font-size: 38px;
}
.index-pct {
  font-size: 34px;
}
.index svg {
  margin-bottom: 18px;
}
.act {
  display: flex;
  flex: 1;
  align-items: center;
  justify-content: center;
  height: 142px;
  padding-bottom: 4px;
  color: #2b2b2b;
  font-size: 60px;
}
.buy {
  color: #d13a34;
}
.sell {
  color: #6a98d0;
}
.system {
  display: flex;
  align-items: center;
  justify-content: center;
  height: 130px;
}
.system .plain {
  width: 236px;
}
</style>
